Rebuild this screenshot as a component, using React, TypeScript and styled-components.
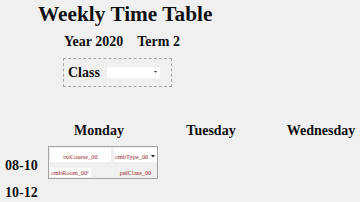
import { createGlobalStyle } from "styled-components";
import styled from "styled-components";

const GlobalStyle = createGlobalStyle`
    html, body {
        margin: 0;
        padding: 0;
        background: #f0f0f0;
    }

    body {
        font-family: "Liberation Serif", "Times New Roman", serif;
        font-weight: bold;
        color: #111;
        width: 360px;
        height: 202px;
        overflow: hidden;
    }
`

const days = [
    { name: "Monday", width: 110 },
    { name: "Tuesday", width: 114 },
    { name: "Wednesday", width: 106 },
];

function Arrow({ size = 4 }: { size?: number }) {
    return (
        <svg width={size} height={size * 0.6} viewBox="0 0 10 6">
            <path d="M0 0 L10 0 L5 6 Z" fill="#222" />
        </svg>
    );
}

function SlotCell({ index }: { index: string }) {
    return (
        <Cell>
            <CourseInput readOnly value={`txtCourse_${index}`} />
            <Combo $width={43} $low>
                <span>cmbType_{index}</span>
                <Arrow />
            </Combo>
            <Combo $width={41}>
                <span>cmbRoom_{index}</span>
                <Arrow />
            </Combo>
            <PanelLabel>pnlClass_{index}</PanelLabel>
        </Cell>
    );
}

function App() {
    return (
        <Page>
            <GlobalStyle />
            <Title>Weekly Time Table</Title>
            <SubTitle>
                <span>Year 2020</span>
                <span>Term 2</span>
            </SubTitle>
            <ClassBox>
                <ClassLabel>Class</ClassLabel>
                <ClassSelect>
                    <Arrow size={3} />
                </ClassSelect>
            </ClassBox>

            <DayHeader>
                <div></div>
                {days.map((d) => (
                    <DayName key={d.name} $width={d.width}>{d.name}</DayName>
                ))}
            </DayHeader>

            <TimeRow>
                <TimeLabel>08-10</TimeLabel>
                <SlotCell index="00" />
            </TimeRow>
            <TimeRow $next>
                <TimeLabel $first={false}>10-12</TimeLabel>
                <div></div>
            </TimeRow>
        </Page>
    );
}

const Page = styled.div`
    display: flex;
    flex-direction: column;
    padding-top: 2px;
`

const Title = styled.h1`
    margin: 0 0 0 38px;
    font-size: 21.3px;
    line-height: 24px;
    font-weight: bold;
`

const SubTitle = styled.div`
    display: flex;
    gap: 14px;
    margin: 8px 0 0 64px;
    font-size: 14px;
    line-height: 16px;
`

const ClassBox = styled.div`
    display: flex;
    align-items: center;
    gap: 7px;
    box-sizing: border-box;
    width: 109px;
    height: 29px;
    margin: 8px 0 0 63px;
    padding-left: 4px;
    border: 1px dashed #a8a8a8;
`

const ClassLabel = styled.span`
    font-size: 14px;
    line-height: 16px;
`

const ClassSelect = styled.div`
    display: flex;
    align-items: center;
    justify-content: flex-end;
    box-sizing: border-box;
    width: 53px;
    height: 11px;
    margin-bottom: 1px;
    padding-right: 3px;
    background: #fff;
`

const DayHeader = styled.div`
    display: flex;
    margin-top: 36px;

    > div:first-child {
        width: 44px;
        flex: none;
    }
`

const DayName = styled.div<{ $width: number }>`
    flex: none;
    width: ${(p) => p.$width}px;
    text-align: center;
    white-space: nowrap;
    font-size: 14px;
    line-height: 16px;
`

const TimeRow = styled.div<{ $next?: boolean }>`
    display: grid;
    grid-template-columns: 48px 110px;
    align-items: start;
    margin-top: ${(p) => (p.$next ? "6px" : "7px")};
`

const TimeLabel = styled.div<{ $first?: boolean }>`
    padding: ${(p) => (p.$first === false ? "0" : "12px")} 0 0 5px;
    font-size: 14px;
    line-height: 16px;
`

const Cell = styled.div`
    display: grid;
    grid-template-columns: 61px 43px;
    grid-template-rows: 14px 9px;
    column-gap: 3px;
    row-gap: 6px;
    box-sizing: border-box;
    width: 110px;
    height: 33px;
    padding: 1px 0 0 1px;
    border: 1px solid #a4a4a4;
    font-family: "Liberation Serif", "Times New Roman", serif;
    font-weight: normal;
    font-size: 6.4px;
    color: #962626;
`

const CourseInput = styled.input`
    box-sizing: border-box;
    width: 61px;
    height: 14px;
    margin: 0;
    padding: 3px 0 0;
    border: none;
    outline: none;
    background: #fff;
    text-align: center;
    font: inherit;
    color: inherit;
`

const Combo = styled.div<{ $width: number; $low?: boolean }>`
    display: flex;
    align-items: center;
    justify-content: space-between;
    box-sizing: border-box;
    width: ${(p) => p.$width}px;
    padding: ${(p) => (p.$low ? "3px 2px 0 1px" : "0 2px 0 1px")};
    background: #fff;
    white-space: nowrap;
    line-height: 9px;
`

const PanelLabel = styled.div`
    display: flex;
    align-items: center;
    justify-content: center;
    white-space: nowrap;
`

export default App;
